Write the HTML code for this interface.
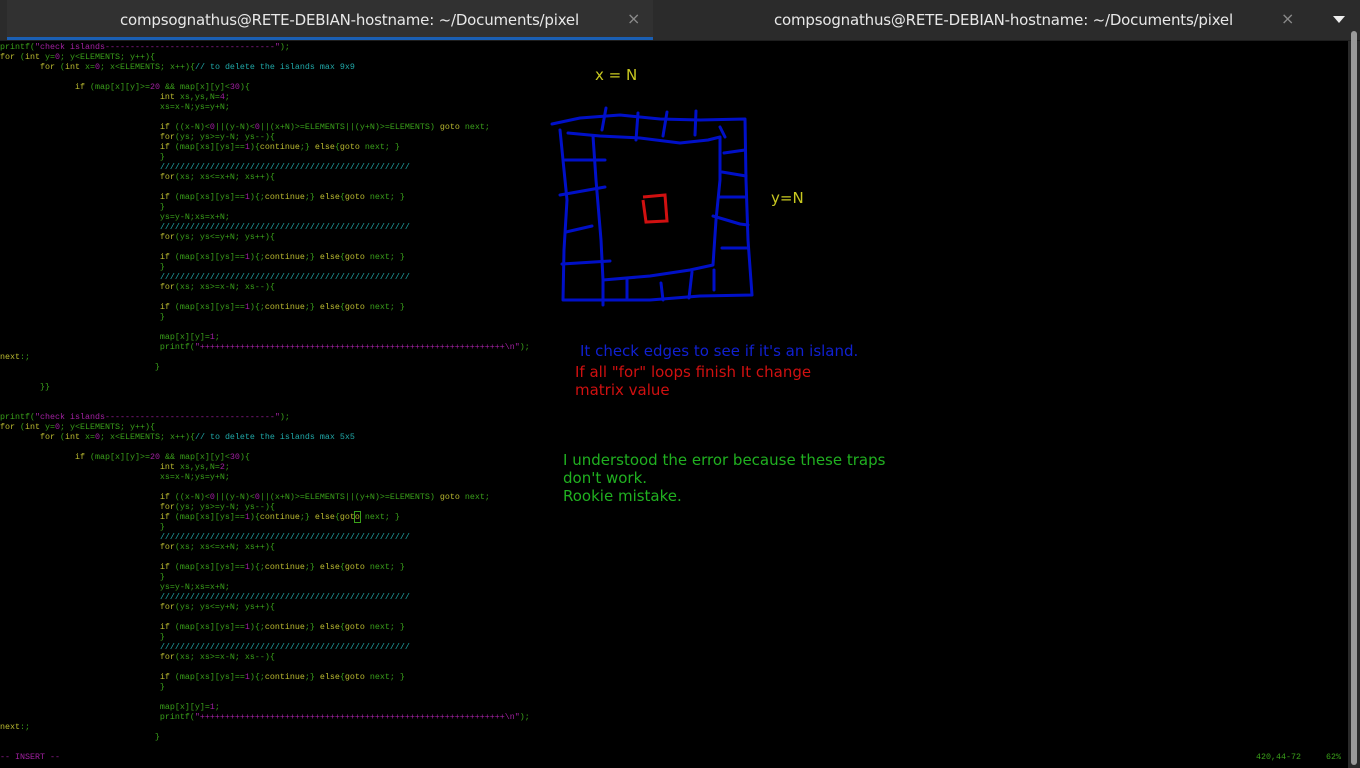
<!DOCTYPE html>
<html><head><meta charset="utf-8"><style>
html,body{margin:0;padding:0;background:#000;width:1360px;height:768px;overflow:hidden}
.tabbar{position:absolute;left:0;top:0;width:1360px;height:40px;background:#2b2b2b;border-bottom:1px solid #1e1e1e}
.tab1{position:absolute;left:7px;top:0;width:646px;height:37px;background:#313131;border-bottom:3px solid #1a5fb4}
.tt{position:absolute;top:11px;font:15px "DejaVu Sans","Liberation Sans",sans-serif;color:#e8e8e8;letter-spacing:-0.2px}
.x{position:absolute;top:9px;color:#8a8a8a;font:16px "DejaVu Sans",sans-serif}
.arrow{position:absolute;left:1333px;top:16px;width:0;height:0;border-left:6px solid transparent;border-right:6px solid transparent;border-top:7px solid #eee}
.sb{position:absolute;left:1348px;top:41px;width:12px;height:727px;background:#2a2a2a}
.th{position:absolute;left:1351px;top:31px;width:6px;height:734px;background:#9a9a9a;border-radius:3px}
pre,.st{position:absolute;margin:0;font:8.33px/10px "Liberation Mono",monospace;color:#3aa01a;white-space:pre}
pre{left:0;top:42px}
.k{color:#bcbc30}.m{color:#a020a0}.c{color:#20a8a8}
.t{position:absolute;font:15px "DejaVu Sans","Liberation Sans",sans-serif;line-height:18px}
.cur{outline:1px solid #3aa01a}
</style></head><body>
<div class="tabbar"></div>
<div class="tab1"></div>
<div class="tt" style="left:120px">compsognathus@RETE-DEBIAN-hostname: ~/Documents/pixel</div>
<div class="x" style="left:627px">×</div>
<div class="tt" style="left:774px">compsognathus@RETE-DEBIAN-hostname: ~/Documents/pixel</div>
<div class="x" style="left:1281px">×</div>
<div class="arrow"></div>
<div class="sb"></div><div class="th"></div>
<pre>printf(<span class="m">"check islands----------------------------------"</span>);
<span class="k">for</span> (<span class="k">int</span> y=<span class="m">0</span>; y&lt;ELEMENTS; y++){
        <span class="k">for</span> (<span class="k">int</span> x=<span class="m">0</span>; x&lt;ELEMENTS; x++){<span class="c">// to delete the islands max 9x9</span>

               <span class="k">if</span> (map[x][y]&gt;=<span class="m">20</span> &amp;&amp; map[x][y]&lt;<span class="m">30</span>){
                                <span class="k">int</span> xs,ys,N=<span class="m">4</span>;
                                xs=x-N;ys=y+N;

                                <span class="k">if</span> ((x-N)&lt;<span class="m">0</span>||(y-N)&lt;<span class="m">0</span>||(x+N)&gt;=ELEMENTS||(y+N)&gt;=ELEMENTS) <span class="k">goto</span> next;
                                <span class="k">for</span>(ys; ys&gt;=y-N; ys--){
                                <span class="k">if</span> (map[xs][ys]==<span class="m">1</span>){<span class="k">continue</span>;} <span class="k">else</span>{<span class="k">goto</span> next; }
                                }
                                <span class="c">//////////////////////////////////////////////////</span>
                                <span class="k">for</span>(xs; xs&lt;=x+N; xs++){

                                <span class="k">if</span> (map[xs][ys]==<span class="m">1</span>){;<span class="k">continue</span>;} <span class="k">else</span>{<span class="k">goto</span> next; }
                                }
                                ys=y-N;xs=x+N;
                                <span class="c">//////////////////////////////////////////////////</span>
                                <span class="k">for</span>(ys; ys&lt;=y+N; ys++){

                                <span class="k">if</span> (map[xs][ys]==<span class="m">1</span>){;<span class="k">continue</span>;} <span class="k">else</span>{<span class="k">goto</span> next; }
                                }
                                <span class="c">//////////////////////////////////////////////////</span>
                                <span class="k">for</span>(xs; xs&gt;=x-N; xs--){

                                <span class="k">if</span> (map[xs][ys]==<span class="m">1</span>){;<span class="k">continue</span>;} <span class="k">else</span>{<span class="k">goto</span> next; }
                                }

                                map[x][y]=<span class="m">1</span>;
                                printf(<span class="m">"+++++++++++++++++++++++++++++++++++++++++++++++++++++++++++++\n"</span>);
<span class="k">next</span>:;
                               }

        }}


printf(<span class="m">"check islands----------------------------------"</span>);
<span class="k">for</span> (<span class="k">int</span> y=<span class="m">0</span>; y&lt;ELEMENTS; y++){
        <span class="k">for</span> (<span class="k">int</span> x=<span class="m">0</span>; x&lt;ELEMENTS; x++){<span class="c">// to delete the islands max 5x5</span>

               <span class="k">if</span> (map[x][y]&gt;=<span class="m">20</span> &amp;&amp; map[x][y]&lt;<span class="m">30</span>){
                                <span class="k">int</span> xs,ys,N=<span class="m">2</span>;
                                xs=x-N;ys=y+N;

                                <span class="k">if</span> ((x-N)&lt;<span class="m">0</span>||(y-N)&lt;<span class="m">0</span>||(x+N)&gt;=ELEMENTS||(y+N)&gt;=ELEMENTS) <span class="k">goto</span> next;
                                <span class="k">for</span>(ys; ys&gt;=y-N; ys--){
                                <span class="k">if</span> (map[xs][ys]==<span class="m">1</span>){<span class="k">continue</span>;} <span class="k">else</span>{<span class="k">got<span class="cur">o</span></span> next; }
                                }
                                <span class="c">//////////////////////////////////////////////////</span>
                                <span class="k">for</span>(xs; xs&lt;=x+N; xs++){

                                <span class="k">if</span> (map[xs][ys]==<span class="m">1</span>){;<span class="k">continue</span>;} <span class="k">else</span>{<span class="k">goto</span> next; }
                                }
                                ys=y-N;xs=x+N;
                                <span class="c">//////////////////////////////////////////////////</span>
                                <span class="k">for</span>(ys; ys&lt;=y+N; ys++){

                                <span class="k">if</span> (map[xs][ys]==<span class="m">1</span>){;<span class="k">continue</span>;} <span class="k">else</span>{<span class="k">goto</span> next; }
                                }
                                <span class="c">//////////////////////////////////////////////////</span>
                                <span class="k">for</span>(xs; xs&gt;=x-N; xs--){

                                <span class="k">if</span> (map[xs][ys]==<span class="m">1</span>){;<span class="k">continue</span>;} <span class="k">else</span>{<span class="k">goto</span> next; }
                                }

                                map[x][y]=<span class="m">1</span>;
                                printf(<span class="m">"+++++++++++++++++++++++++++++++++++++++++++++++++++++++++++++\n"</span>);
<span class="k">next</span>:;
                               }
</pre>
<div class="st m" style="left:0;top:752px">-- INSERT --</div>
<div class="st" style="left:1256px;top:752px">420,44-72</div>
<div class="st" style="left:1326px;top:752px">62%</div>
<svg style="position:absolute;left:0;top:0" width="1360" height="768">
<g fill="none" stroke="#0010c8" stroke-width="3" stroke-linecap="round" stroke-linejoin="round">
<polyline points="552,124 580,118 620,115 660,119 700,120 745,119 746,180 748,240 752,295 700,296 650,300 600,300 563,300 564,250 567,200 563,160 560,130"/>
<polyline points="568,133 600,136 640,138 680,143 708,140 720,137 720,180 716,220 713,265 690,270 650,276 603,280 601,240 596,180 593,136"/>
<polyline points="606,108 602,130"/><polyline points="638,113 636,140"/><polyline points="667,112 663,136"/><polyline points="696,111 695,135"/>
<polyline points="720,127 725,137"/><polyline points="565,160 605,160"/><polyline points="560,195 605,187"/><polyline points="566,232 592,226"/>
<polyline points="562,264 610,261"/><polyline points="724,153 745,150"/><polyline points="722,172 746,176"/><polyline points="720,197 745,197"/>
<polyline points="713,216 740,224 748,225"/><polyline points="722,248 748,248"/><polyline points="603,280 603,305"/><polyline points="627,280 627,298"/>
<polyline points="661,283 663,300"/><polyline points="692,272 689,298"/><polyline points="714,270 714,290"/>
</g>
<polyline points="643,197 665,195 667,221 646,222 643,200" fill="none" stroke="#d01010" stroke-width="3"/>
</svg>
<div class="t" style="left:595px;top:66px;color:#c8c820">x = N</div>
<div class="t" style="left:771px;top:189px;color:#c8c820">y=N</div>
<div class="t" style="left:580px;top:342px;color:#1020d0">It check edges to see if it's an island.</div>
<div class="t" style="left:575px;top:363px;color:#d01010">If all "for" loops finish It change<br>matrix value</div>
<div class="t" style="left:563px;top:451px;color:#20b020">I understood the error because these traps<br>don't work.<br>Rookie mistake.</div>
</body></html>
